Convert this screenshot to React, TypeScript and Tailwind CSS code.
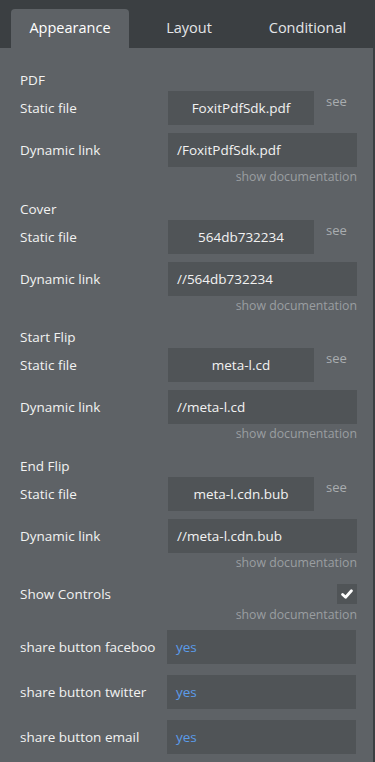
import React from 'react';

interface FileSection {
  title: string;
  staticFile: string;
  dynamicLink: string;
}

const sections: FileSection[] = [
  { title: 'PDF', staticFile: 'FoxitPdfSdk.pdf', dynamicLink: '/FoxitPdfSdk.pdf' },
  { title: 'Cover', staticFile: '564db732234', dynamicLink: '//564db732234' },
  { title: 'Start Flip', staticFile: 'meta-l.cd', dynamicLink: '//meta-l.cd' },
  { title: 'End Flip', staticFile: 'meta-l.cdn.bub', dynamicLink: '//meta-l.cdn.bub' },
];

const shareRows = ['share button faceboo', 'share button twitter', 'share button email'];

const DocLink = () => (
  <div className="w-[337px] h-4 flex justify-end text-[12.3px] leading-4 text-[#9a9ea1]">
    show documentation
  </div>
);

const App: React.FC = () => {
  return (
    <div
      className="w-[375px] h-[762px] bg-[#3b3f42] flex flex-col overflow-hidden text-[#f2f2f2]"
      style={{ fontFamily: '"Open Sans", "Noto Sans", sans-serif' }}
    >
      {/* Tabs */}
      <div className="h-12 flex items-end pl-[11px] text-[14.5px] shrink-0">
        <div className="w-[118px] h-[39px] bg-[#5e6266] rounded-t-[4px] flex items-center justify-center pb-[2px] text-white">
          Appearance
        </div>
        <div className="w-[120px] h-[39px] flex items-center justify-center pb-[2px] text-[#e4e6e8]">
          Layout
        </div>
        <div className="w-[117px] h-[39px] flex items-center justify-center pb-[2px] text-[#e4e6e8]">
          Conditional
        </div>
      </div>

      {/* Panel */}
      <div className="w-[373px] flex-1 bg-[#5e6266] pt-[22px] pl-5 text-[13.5px]">
        {sections.map((s) => (
          <div key={s.title} className="flex flex-col mb-[13.67px]">
            <div className="h-5 leading-5">{s.title}</div>
            <div className="mt-px h-[34px] flex items-center">
              <div className="w-[148px]">Static file</div>
              <div className="w-[146px] h-[34px] bg-[#505457] flex items-center justify-center">
                {s.staticFile}
              </div>
              <div className="self-start ml-3 mt-[1px] text-[13px] text-[#a9adb0]">see</div>
            </div>
            <div className="mt-2 h-[34px] flex items-center">
              <div className="w-[148px]">Dynamic link</div>
              <div className="w-[189px] h-[34px] bg-[#505457] flex items-center pl-[9px]">
                {s.dynamicLink}
              </div>
            </div>
            <div className="mt-[2px]">
              <DocLink />
            </div>
          </div>
        ))}

        {/* Show Controls */}
        <div className="-mt-[1px] h-5 w-[337px] flex items-center justify-between">
          <span>Show Controls</span>
          <div className="w-5 h-5 bg-[#505457] flex items-center justify-center">
            <svg width="12" height="10" viewBox="0 0 12 10">
              <path d="M1.6 5.4 L4.6 8.2 L10.4 1.8" fill="none" stroke="#ffffff" strokeWidth="2.8" strokeLinecap="round" strokeLinejoin="round" />
            </svg>
          </div>
        </div>
        <div className="mt-[3px]">
          <DocLink />
        </div>

        <div className="mt-[7px] flex flex-col gap-[11px]">
          {shareRows.map((label) => (
            <div key={label} className="h-[34px] flex items-center">
              <div className="w-[147px] whitespace-nowrap overflow-hidden">{label}</div>
              <div className="w-[189px] h-[34px] bg-[#505457] flex items-center pl-[9px] text-[#5b9cea]">
                yes
              </div>
            </div>
          ))}
        </div>
      </div>
    </div>
  );
};

export default App;
